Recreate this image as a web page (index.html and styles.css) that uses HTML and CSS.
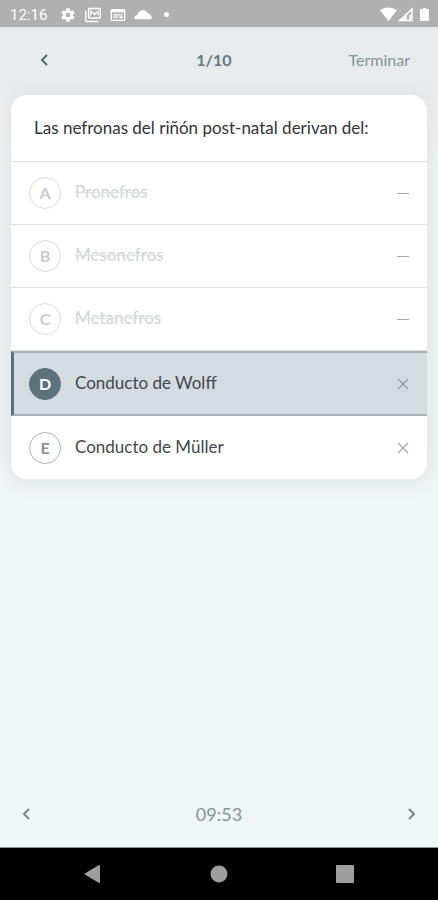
FILE: index.html
```html
<!DOCTYPE html>
<html lang="es">
<head>
<meta charset="utf-8">
<meta name="viewport" content="width=device-width, initial-scale=1">
<title>Cuestionario</title>
<link rel="stylesheet" href="styles.css">
</head>
<body>
<div class="status">
  <span class="clock">12:16</span>
  <svg class="status-icon" viewBox="0 0 24 24"><path fill-rule="evenodd" d="M19.4 13a7.500 7.500 0 0 0 0-2l2.100-1.600c.2-.2.300-.4.100-.7l-2-3.400c-.1-.3-.4-.3-.6-.2l-2.500 1a7.300 7.300 0 0 0-1.700-1l-.4-2.600c0-.3-.2-.5-.5-.5h-4c-.3 0-.5.200-.5.500L9 5.100c-.6.200-1.200.6-1.700 1l-2.500-1c-.2-.1-.5 0-.6.200l-2 3.400c-.1.300-.1.500.1.700L4.500 11a7.500 7.500 0 0 0 0 2l-2.200 1.600c-.2.200-.2.400-.1.700l2 3.400c.1.300.4.300.6.200l2.500-1c.5.400 1.100.8 1.700 1l.4 2.600c0 .3.200.5.500.5h4c.3 0 .5-.2.500-.5l.4-2.600c.6-.2 1.200-.6 1.700-1l2.500 1c.2.100.5 0 .6-.2l2-3.400c.2-.3.100-.5-.1-.7zM12 15.500a3.500 3.500 0 1 1 0-7 3.500 3.500 0 0 1 0 7z"/></svg>
  <svg class="status-icon wide" viewBox="0 0 24 22"><path d="M2 5v14a1 1 0 0 0 1 1h16" fill="none" stroke="#fff" stroke-width="2"/><path fill-rule="evenodd" d="M7 1h14q2 0 2 2v11q0 2-2 2H7q-2 0-2-2V3q0-2 2-2zM7 3v11h14V3z"/><path opacity=".8" d="M8 13V4l6 4 6-4v9l-3-4-3 3-3-3z"/></svg>
  <svg class="status-icon" viewBox="0 0 24 24"><path fill-rule="evenodd" d="M3 3h18q2 0 2 2v14q0 2-2 2H3q-2 0-2-2V5q0-2 2-2zM3 8v11h18V8z"/><path opacity=".6" d="M5 10h14v3H5zM5 13h7v4H5z"/><path d="M14 14h5v3h-5z"/></svg>
  <svg class="status-icon wide" viewBox="0 0 24 22"><path d="M3 17q-3 0-3-2 0-3 4-4 3-7 8-7 4 0 6 4 6 3 6 7 0 2-3 2z"/></svg>
  <span class="dot"></span>
  <span class="signals">
    <svg class="signal" viewBox="0 0 50 16"><path d="M0 3Q8-2 17 3L8.500 14zM49 3v10q0 1-1 1h-7q-1 0-1-1V3q0-1 1-1h2V1h3v1h2q1 0 1 1z"/><path d="M20 13.500 32 2v11.500z" fill="none" stroke="#fff" stroke-width="1.500"/><path opacity=".8" d="M18 14 27 6v8zM29 8h2v6h-2z"/></svg>
  </span>
</div>
<main class="app">
  <header class="topbar">
    <button class="nav" aria-label="Volver"><svg class="chevron strong" viewBox="0 0 12 14"><path d="M9 2 4 7l5 5"/></svg></button>
    <h1 class="progress">1/10</h1>
    <button class="finish">Terminar</button>
  </header>
  <section class="card">
    <h2 class="question">Las nefronas del riñón post-natal derivan del:</h2>
    <ul class="options">
      <li class="option discarded"><button class="choice"><span class="letter">A</span><span class="label">Pronefros</span></button><button class="toggle" aria-label="Restaurar A"><svg viewBox="0 0 12 12"><path d="M0 6.500h12"/></svg></button></li>
      <li class="option discarded"><button class="choice"><span class="letter">B</span><span class="label">Mesonefros</span></button><button class="toggle" aria-label="Restaurar B"><svg viewBox="0 0 12 12"><path d="M0 6.500h12"/></svg></button></li>
      <li class="option discarded"><button class="choice"><span class="letter">C</span><span class="label">Metanefros</span></button><button class="toggle" aria-label="Restaurar C"><svg viewBox="0 0 12 12"><path d="M0 6.500h12"/></svg></button></li>
      <li class="option selected"><button class="choice"><span class="letter">D</span><span class="label">Conducto de Wolff</span></button><button class="toggle" aria-label="Descartar D"><svg viewBox="0 0 12 12"><path d="m1 1 10 10M11 1 1 11"/></svg></button></li>
      <li class="option"><button class="choice"><span class="letter">E</span><span class="label">Conducto de Müller</span></button><button class="toggle" aria-label="Descartar E"><svg viewBox="0 0 12 12"><path d="m1 1 10 10M11 1 1 11"/></svg></button></li>
    </ul>
  </section>
  <footer class="pager">
    <button class="nav" aria-label="Anterior"><svg class="chevron" viewBox="0 0 12 14"><path d="M9 2 4 7l5 5"/></svg></button>
    <time class="timer">09:53</time>
    <button class="nav" aria-label="Siguiente"><svg class="chevron" viewBox="0 0 12 14"><path d="m3 2 5 5-5 5"/></svg></button>
  </footer>
</main>
<nav class="system">
  <button class="system-key" aria-label="Atrás"><svg viewBox="0 0 20 20"><path d="M1 10 16 1q1 0 1 1v16q0 1-1 1z"/></svg></button>
  <button class="system-key" aria-label="Inicio"><svg viewBox="0 0 20 20"><circle cx="10" cy="10" r="8.500"/></svg></button>
  <button class="system-key" aria-label="Recientes"><svg viewBox="0 0 20 20"><rect x="1" y="1" width="18" height="18" rx="1"/></svg></button>
</nav>
</body>
</html>
```
FILE: styles.css
```css
* { box-sizing: border-box; }
body {
  margin: 0;
  min-height: 100vh;
  display: flex;
  flex-direction: column;
  background: #f0f5f7;
  color: #3f484d;
  font: 16px/24px Lato, sans-serif;
}
button {
  padding: 0;
  border: 0;
  background: none;
  color: inherit;
  font: inherit;
  cursor: pointer;
}
svg { display: block; }

.status {
  display: flex;
  align-items: center;
  height: 27px;
  padding: 2px 8px 0 10px;
  background: #b0b0b0;
  color: #fff;
}
.clock { margin-right: 13px; font: 15px/24px Roboto, sans-serif; }
.status-icon { width: 16px; height: 16px; margin-right: 8px; fill: #fff; }
.status-icon.wide { width: 18px; }
.dot { width: 5px; height: 5px; margin-left: 4px; border-radius: 50%; background: #fff; }
.signals { margin-left: auto; }
.signal { width: 50px; height: 16px; fill: #fff; }

.app {
  flex: 1;
  display: flex;
  flex-direction: column;
  background: linear-gradient(#e8ebeb 60px, #f0f5f7 140px);
}
.topbar {
  display: grid;
  grid-template-columns: 1fr auto 1fr;
  align-items: center;
  height: 68px;
  padding: 0 28px 2px;
}
.nav { display: grid; place-items: center; justify-self: start; width: 32px; height: 32px; }
.chevron { width: 12px; height: 14px; fill: none; stroke: #75878f; stroke-width: 2; }
.chevron.strong { stroke: #4f6b78; }
.progress { margin: 0; padding-right: 10px; color: #607985; font-size: 16px; font-weight: 700; }
.finish { justify-self: end; color: #84939a; }

.card {
  margin: 0 11px;
  overflow: hidden;
  border-radius: 16px;
  background: #fff;
  box-shadow: 0 0 18px 4px #dfe4e5;
}
.question {
  margin: 0;
  padding: 21px 23px;
  border-bottom: 1px solid #dce0e2;
  color: #30363a;
  font-size: 17px;
  font-weight: 400;
}
.options { margin: 0; padding: 0; list-style: none; }
.option {
  display: flex;
  height: 63px;
  padding: 0 18px;
  border-bottom: 1px solid #e2e5e7;
}
.option:last-child { border-bottom: 0; }
.choice { flex: 1; display: flex; align-items: center; gap: 14px; text-align: left; }
.letter {
  width: 32px;
  height: 32px;
  border: 1px solid #aab1b6;
  border-radius: 50%;
  color: #87939a;
  font-weight: 700;
  line-height: 30px;
  text-align: center;
}
.label { padding-bottom: 2px; font-size: 17px; }
.toggle svg { width: 12px; height: 12px; fill: none; stroke: #a2aaae; stroke-width: 1.3; }
.discarded .letter { border-color: #d8dbde; color: #c6cbcf; }
.discarded .label { color: #d0d4d7; text-decoration: line-through 1px #dfe2e4; }
.discarded .toggle svg { stroke-width: 1; }
.selected {
  height: 65px;
  padding-left: 15px;
  border: solid #a9b4ba;
  border-width: 2px 0;
  border-left: 3px solid #5a727f;
  background: #d4dbe1;
}
.selected .letter { border-color: #5c727d; background: #5c727d; color: #fff; }
.selected .toggle svg { stroke: #939da2; }

.pager {
  display: grid;
  grid-template-columns: 1fr auto 1fr;
  align-items: center;
  height: 68px;
  margin-top: auto;
  padding: 0 10px;
  border-bottom: 1px solid #8d9193;
}
.pager .nav:last-child { justify-self: end; }
.timer { color: #84939a; font-size: 18px; }

.system {
  display: flex;
  justify-content: center;
  align-items: center;
  gap: 106px;
  height: 52px;
  background: #000;
}
.system-key svg { width: 20px; height: 20px; fill: #9e9e9e; }
```
